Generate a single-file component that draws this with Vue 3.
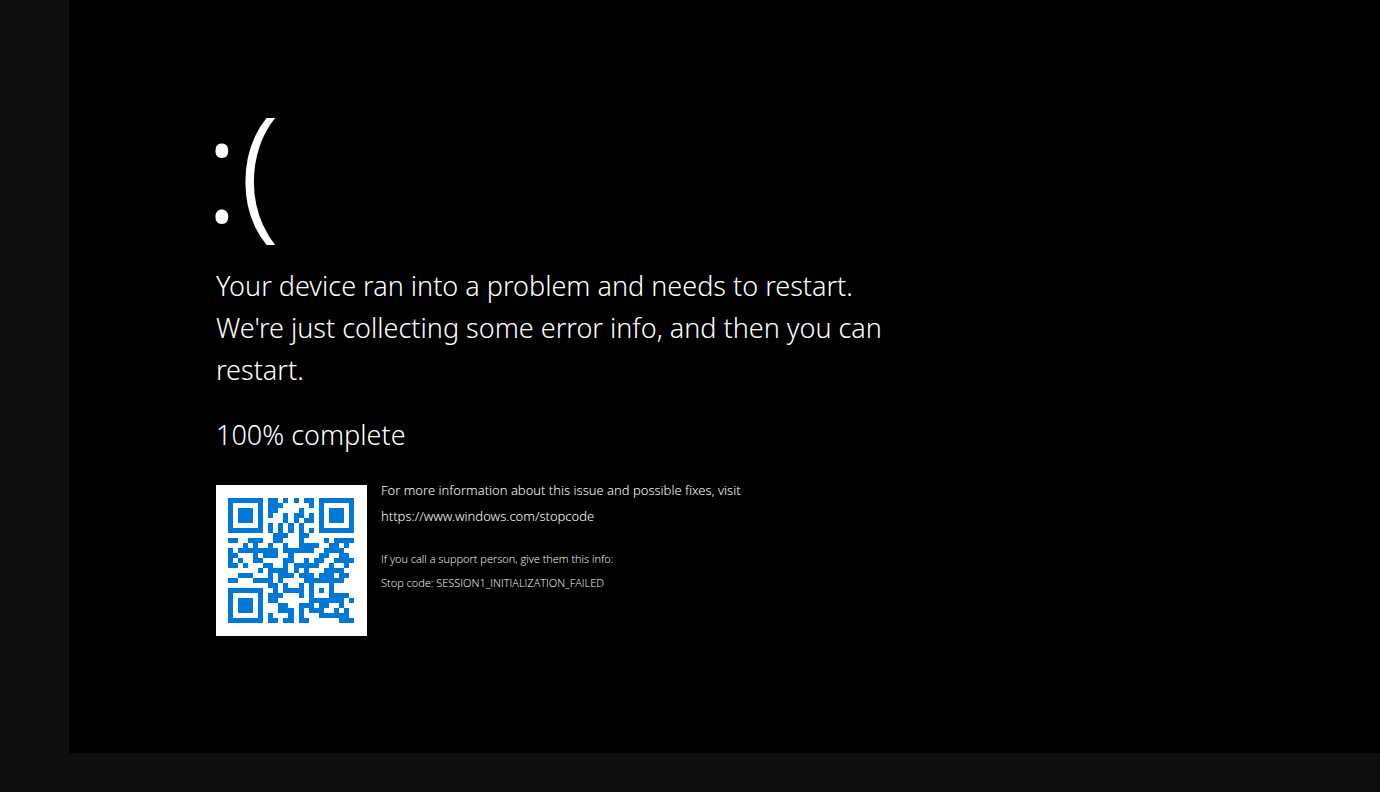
<script setup>
const url = 'https://www.windows.com/stopcode'
const modules = encode(url)

const qrPath = modules
  .flatMap((row, y) => row.map((dark, x) => (dark ? `M${x} ${y}h1v1h-1z` : '')))
  .join('')

function multiply(a, b) {
  let product = 0
  for (let i = 7; i >= 0; i--) {
    product = (product << 1) ^ ((product >>> 7) * 0x11d)
    product ^= ((b >>> i) & 1) * a
  }
  return product
}

// Reed-Solomon remainder over GF(256)
function errorWords(data, degree) {
  const divisor = new Array(degree).fill(0)
  divisor[degree - 1] = 1
  let root = 1
  for (let i = 0; i < degree; i++) {
    for (let j = 0; j < degree; j++) {
      divisor[j] = multiply(divisor[j], root)
      if (j + 1 < degree) divisor[j] ^= divisor[j + 1]
    }
    root = multiply(root, 2)
  }
  const rest = new Array(degree).fill(0)
  for (const word of data) {
    const factor = word ^ rest.shift()
    rest.push(0)
    divisor.forEach((d, i) => { rest[i] ^= multiply(d, factor) })
  }
  return rest
}

// Version 2-L code in byte mode, mask 4: 34 data words and 10 error words
function encode(text) {
  const size = 25
  const grid = Array.from({ length: size }, () => new Array(size).fill(null))
  const toBits = (value, length) => value.toString(2).padStart(length, '0')

  const finder = (cy, cx) => {
    for (let dy = -4; dy <= 4; dy++) {
      for (let dx = -4; dx <= 4; dx++) {
        const y = cy + dy
        const x = cx + dx
        if (y < 0 || x < 0 || y >= size || x >= size) continue
        const ring = Math.max(Math.abs(dy), Math.abs(dx))
        grid[y][x] = ring !== 2 && ring !== 4
      }
    }
  }
  for (let i = 0; i < size; i++) grid[6][i] = grid[i][6] = i % 2 === 0
  finder(3, 3)
  finder(3, 21)
  finder(21, 3)
  for (let dy = -2; dy <= 2; dy++) {
    for (let dx = -2; dx <= 2; dx++) {
      grid[18 + dy][18 + dx] = Math.max(Math.abs(dy), Math.abs(dx)) !== 1
    }
  }

  const format = [...'110011000101111'].map((b) => b === '1')
  const near = [0, 1, 2, 3, 4, 5, 7, 8]
  near.forEach((x, i) => { grid[8][x] = format[i] })
  ;[7, 5, 4, 3, 2, 1, 0].forEach((y, i) => { grid[y][8] = format[8 + i] })
  for (let i = 0; i < 7; i++) grid[24 - i][8] = format[i]
  for (let i = 0; i < 8; i++) grid[8][17 + i] = format[7 + i]
  grid[17][8] = true

  let stream = '0100' + toBits(text.length, 8)
  for (const letter of text) stream += toBits(letter.charCodeAt(0), 8)
  stream += '0000'
  const data = stream.match(/.{8}/g).map((b) => parseInt(b, 2))
  const bits = [...data, ...errorWords(data, 10)].map((w) => toBits(w, 8)).join('')

  let index = 0
  for (let right = size - 1; right >= 1; right -= 2) {
    if (right === 6) right = 5
    const upward = ((right + 1) & 2) === 0
    for (let step = 0; step < size; step++) {
      const y = upward ? size - 1 - step : step
      for (const x of [right, right - 1]) {
        if (grid[y][x] !== null) continue
        const flip = (Math.floor(y / 2) + Math.floor(x / 3)) % 2 === 0
        grid[y][x] = (bits[index] === '1') !== flip
        index++
      }
    }
  }
  return grid
}
</script>

<template>
  <div class="monitor">
    <main class="screen">
      <div class="face">:(</div>
      <h1 class="message">
        Your device ran into a problem and needs to restart. We're just collecting some error info, and then you can restart.
      </h1>
      <p class="progress">100% complete</p>
      <section class="details">
        <svg class="qr" viewBox="-2.4 -2.5 30 30" role="img" aria-label="QR code">
          <path :d="qrPath" shape-rendering="crispEdges" />
        </svg>
        <div class="info">
          <p class="visit">For more information about this issue and possible fixes, visit</p>
          <p class="visit"><a :href="url">{{ url }}</a></p>
          <p class="support first">If you call a support person, give them this info:</p>
          <p class="support">Stop code: SESSION1_INITIALIZATION_FAILED</p>
        </div>
      </section>
    </main>
  </div>
</template>

<style>
body {
  margin: 0;
  background: #0e0e0e;
}
</style>

<style scoped>
.monitor {
  display: flex;
  box-sizing: border-box;
  min-height: 100vh;
  padding: 0 0 39px 5vw;
  background: #0e0e0e;
}

.screen {
  flex: 1;
  box-sizing: border-box;
  padding: 86px 24px 24px 147px;
  background: #000;
  color: #fff;
  font-family: "Noto Sans", "Open Sans", sans-serif;
  font-weight: 300;
}

.face {
  margin-left: -12px;
  font-size: 145px;
  line-height: 160px;
}

.message,
.progress {
  max-width: 700px;
  margin: 0;
  font-size: 27px;
  line-height: 42px;
  font-weight: 300;
}

.message {
  margin-top: 19px;
}

.progress {
  margin-top: 23px;
}

.details {
  display: flex;
  gap: 14px;
  margin-top: 29px;
}

.qr {
  flex: none;
  width: 151px;
  height: 151px;
  background: #fff;
  fill: #0078d7;
}

.info {
  margin-top: -8px;
}

.info p {
  margin: 0;
}

.info .visit {
  font-size: 13px;
  line-height: 26px;
}

.info .support {
  font-family: "Open Sans", "Noto Sans", sans-serif;
  font-size: 11px;
  line-height: 24px;
}

.info .first {
  margin-top: 18px;
}

a {
  color: inherit;
  text-decoration: none;
}
</style>
